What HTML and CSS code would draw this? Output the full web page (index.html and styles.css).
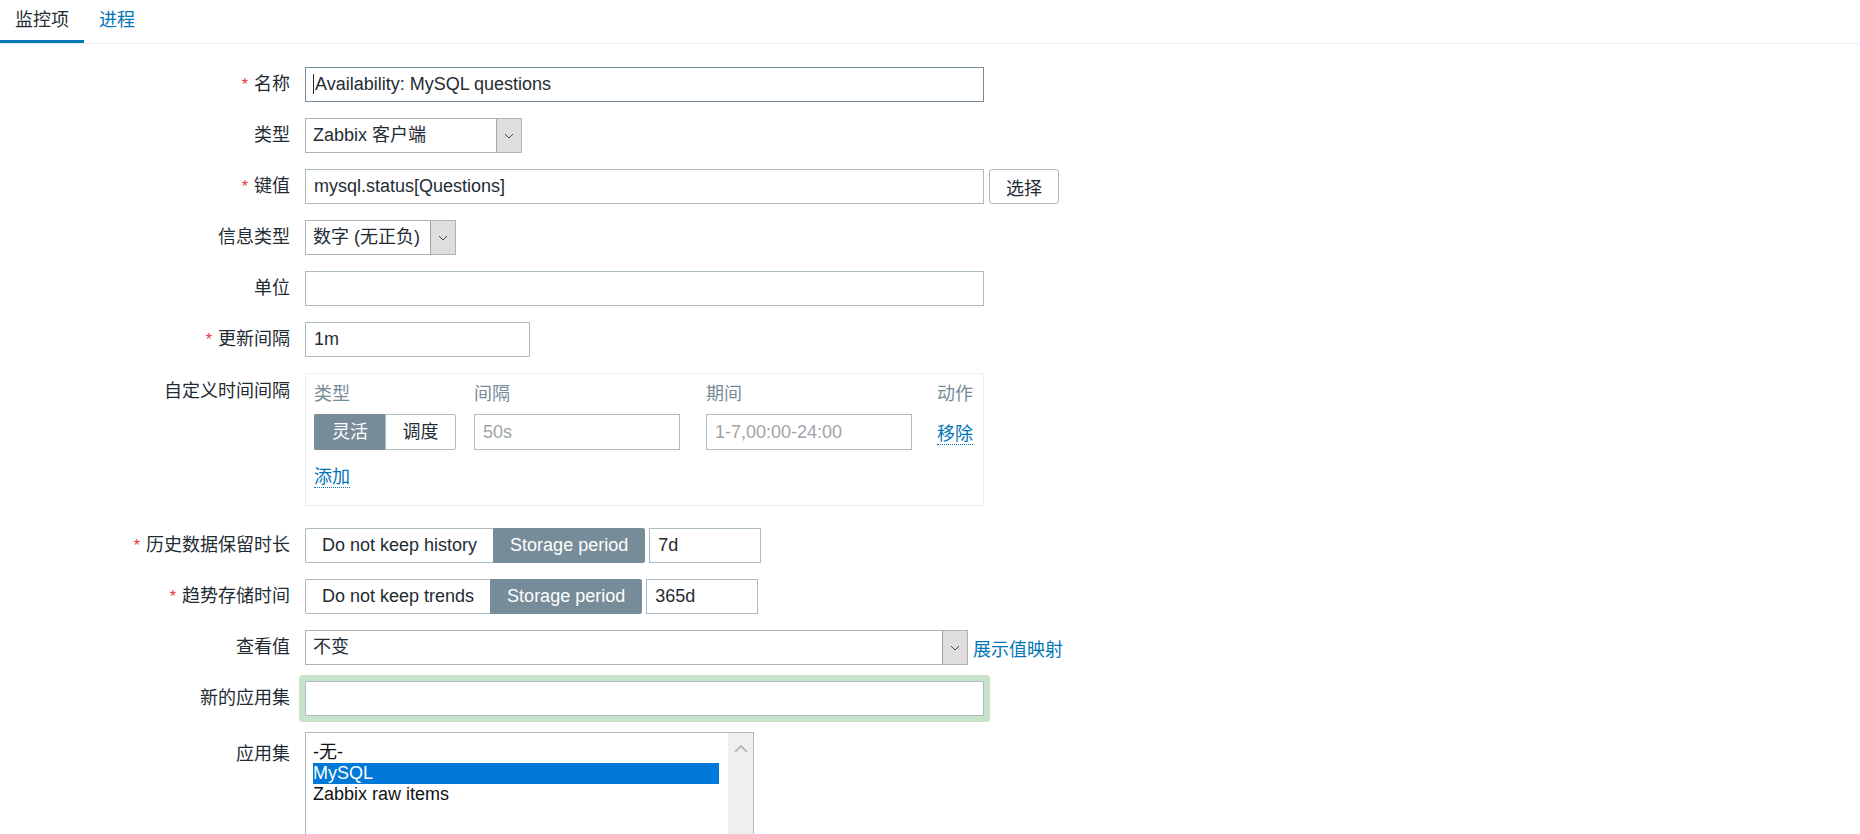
FILE: index.html
```html
<!DOCTYPE html>
<html lang="zh-CN">
<head>
  <meta charset="UTF-8">
  <title>监控项</title>
  <link rel="stylesheet" href="styles.css">
</head>
<body>

  <div class="tabs">
    <span class="tab active">监控项</span>
    <a class="tab">进程</a>
  </div>

  <div class="form">

    <div class="row">
      <div class="lbl"><span class="req">*</span>名称</div>
      <div class="ctl">
        <div class="field focus wide"><span class="caret"></span>Availability: MySQL questions</div>
      </div>
    </div>

    <div class="row">
      <div class="lbl">类型</div>
      <div class="ctl">
        <div class="select w-type"><span class="val">Zabbix 客户端</span><span class="arrow"><svg width="10" height="6" viewBox="0 0 10 6"><polyline points="1,1 5,5 9,1" fill="none" stroke="#444" stroke-width="1"/></svg></span></div>
      </div>
    </div>

    <div class="row">
      <div class="lbl"><span class="req">*</span>键值</div>
      <div class="ctl">
        <div class="field wide">mysql.status[Questions]</div>
        <button class="btn">选择</button>
      </div>
    </div>

    <div class="row">
      <div class="lbl">信息类型</div>
      <div class="ctl">
        <div class="select w-info"><span class="val">数字 (无正负)</span><span class="arrow"><svg width="10" height="6" viewBox="0 0 10 6"><polyline points="1,1 5,5 9,1" fill="none" stroke="#444" stroke-width="1"/></svg></span></div>
      </div>
    </div>

    <div class="row">
      <div class="lbl">单位</div>
      <div class="ctl">
        <div class="field wide"></div>
      </div>
    </div>

    <div class="row">
      <div class="lbl"><span class="req">*</span>更新间隔</div>
      <div class="ctl">
        <div class="field w-delay">1m</div>
      </div>
    </div>

    <div class="row row-box">
      <div class="lbl lbl-top">自定义时间间隔</div>
      <div class="ctl">
        <div class="box">
          <div class="grid">
            <div class="hd">类型</div>
            <div class="hd">间隔</div>
            <div class="hd">期间</div>
            <div class="hd right">动作</div>

            <div class="seg seg-sm"><span class="on">灵活</span><span>调度</span></div>
            <div class="field w-int placeholder">50s</div>
            <div class="field w-int placeholder">1-7,00:00-24:00</div>
            <div class="right"><a class="link dotted">移除</a></div>
          </div>
          <a class="link dotted add">添加</a>
        </div>
      </div>
    </div>

    <div class="row">
      <div class="lbl"><span class="req">*</span>历史数据保留时长</div>
      <div class="ctl">
        <div class="seg"><span>Do not keep history</span><span class="on">Storage period</span></div>
        <div class="field w-period">7d</div>
      </div>
    </div>

    <div class="row">
      <div class="lbl"><span class="req">*</span>趋势存储时间</div>
      <div class="ctl">
        <div class="seg"><span>Do not keep trends</span><span class="on">Storage period</span></div>
        <div class="field w-period">365d</div>
      </div>
    </div>

    <div class="row">
      <div class="lbl">查看值</div>
      <div class="ctl">
        <div class="select w-value"><span class="val">不变</span><span class="arrow"><svg width="10" height="6" viewBox="0 0 10 6"><polyline points="1,1 5,5 9,1" fill="none" stroke="#444" stroke-width="1"/></svg></span></div>
        <a class="link map">展示值映射</a>
      </div>
    </div>

    <div class="row">
      <div class="lbl">新的应用集</div>
      <div class="ctl">
        <div class="field wide glow"></div>
      </div>
    </div>

    <div class="row">
      <div class="lbl lbl-list">应用集</div>
      <div class="ctl">
        <div class="listbox">
          <div class="opts">
            <div class="opt">-无-</div>
            <div class="opt sel">MySQL</div>
            <div class="opt">Zabbix raw items</div>
          </div>
          <div class="scroll"><svg width="14" height="8" viewBox="0 0 14 8"><polyline points="1,7 7,1 13,7" fill="none" stroke="#bcbcbc" stroke-width="2"/></svg></div>
        </div>
      </div>
    </div>

  </div>

</body>
</html>
```

FILE: styles.css
```css
html, body { margin: 0; padding: 0; background: #fff; }
body { font-family: "Liberation Sans", Arial, "Noto Sans CJK SC", sans-serif; font-size: 18px; color: #1f2c33; overflow: hidden; height: 834px; }

.tabs { display: flex; height: 43px; border-bottom: 1px solid #ebeef0; }
.tab { display: block; padding: 0 15px; line-height: 40px; height: 40px; border-bottom: 3px solid transparent; color: #0275b8; }
.tab.active { color: #1f2c33; border-bottom-color: #0275b8; }

.form { padding-top: 23px; }
.row { display: flex; margin-bottom: 16px; }
.row:last-child { margin-bottom: 0; }
.row-box { margin-bottom: 22px; }
.lbl { width: 290px; flex: none; text-align: right; line-height: 35px; white-space: nowrap; }
.lbl-top { line-height: 21px; padding-top: 8px; }
.lbl-list { line-height: 21px; padding-top: 12px; }
.req { color: #e33734; margin-right: 6px; font-size: 16px; }
.ctl { margin-left: 15px; display: flex; align-items: center; }

.field { box-sizing: border-box; height: 35px; line-height: 33px; border: 1px solid #acbbc2; padding: 0 8px; background: #fff; white-space: nowrap; }
.field.focus { border-color: #768d99; padding-left: 7px; }
.caret { display: inline-block; width: 1px; height: 20px; background: #1f2c33; vertical-align: -4px; margin-right: 1px; }
.wide { width: 679px; }
.w-delay { width: 225px; }
.w-period { width: 112px; margin-left: 4px; }
.w-int { width: 206px; }
.placeholder { color: #9ea4a8; }
.glow { box-shadow: 0 0 0 6px #c8e3c9; border-radius: 1px; }

.select { box-sizing: border-box; height: 35px; display: flex; border: 1px solid #b3b3b3; background: #fff; }
.select .val { flex: 1; line-height: 33px; padding-left: 7px; white-space: nowrap; }
.select .arrow { width: 24px; background: #dedede; border-left: 1px solid #a6a6a6; display: flex; align-items: center; justify-content: center; }
.w-type { width: 217px; }
.w-info { width: 151px; }
.w-value { width: 663px; }

.btn { box-sizing: border-box; height: 35px; width: 70px; margin-left: 5px; border: 1px solid #b6b6b6; border-radius: 3px; background: #fff; font: inherit; color: #1f2c33; padding: 0; }

.link { color: #0275b8; cursor: pointer; }
.dotted { border-bottom: 1px dotted #0275b8; }
.map { margin-left: 5px; }

.seg { display: flex; height: 35px; }
.seg span { box-sizing: border-box; height: 35px; line-height: 33px; padding: 0 16px; border: 1px solid #acbbc2; background: #fff; white-space: nowrap; }
.seg span:first-child { border-radius: 2px 0 0 2px; border-right: none; }
.seg span:last-child { border-radius: 0 2px 2px 0; }
.seg span.on { background: #768d99; border-color: #768d99; color: #fff; }
.seg-sm span { width: 71px; padding: 0; text-align: center; height: 36px; line-height: 34px; }
.seg-sm { height: 36px; }

.box { box-sizing: border-box; width: 679px; height: 133px; border: 1px solid #ebeef0; padding: 10px 10px 0 8px; }
.grid { display: grid; grid-template-columns: 160px 232px 206px 1fr; row-gap: 9px; align-items: center; }
.hd { color: #768d99; line-height: 21px; white-space: nowrap; }
.grid .field { height: 36px; line-height: 34px; }
.right { text-align: right; white-space: nowrap; }
.add { display: inline-block; margin-top: 17px; line-height: 20px; }

.listbox { box-sizing: border-box; width: 449px; height: 102px; border: 1px solid #acbbc2; border-bottom: none; display: flex; }
.opts { flex: 1; padding: 9px 9px 0 7px; }
.opt { line-height: 21px; height: 21px; white-space: nowrap; color: #111; }
.opt.sel { background: #0078d7; color: #fff; }
.scroll { width: 25px; background: #f0f0f0; display: flex; justify-content: center; padding-top: 12px; box-sizing: border-box; }
```
